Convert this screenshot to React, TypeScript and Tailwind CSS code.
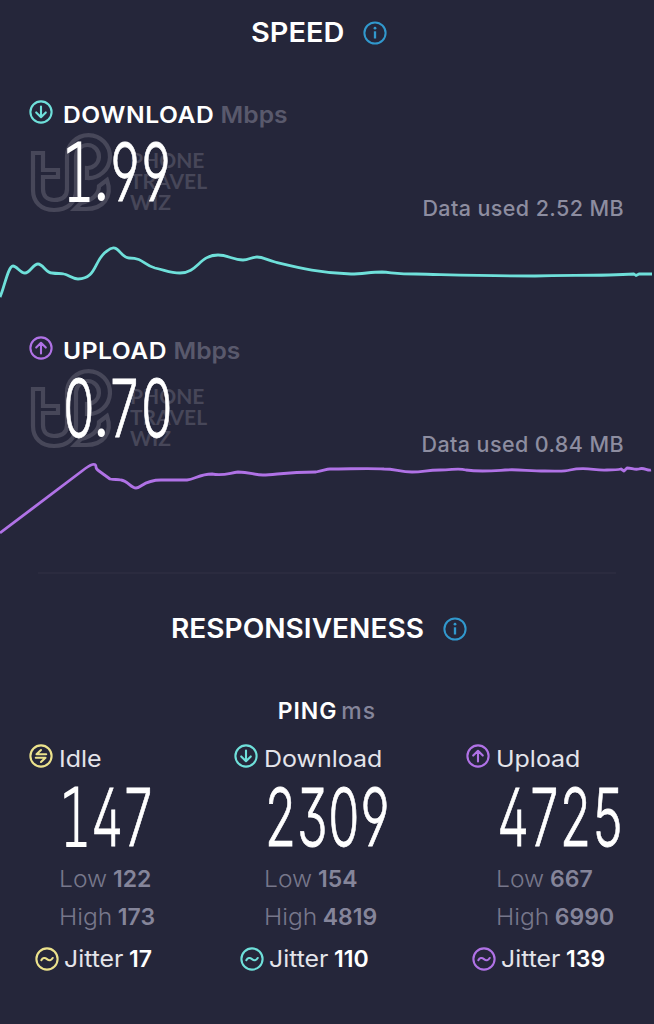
import React from 'react';

type Tone = 'teal' | 'purple' | 'yellow';

const toneClass: Record<Tone, string> = {
    teal: 'text-[#6fe0da]',
    purple: 'text-[#b072e6]',
    yellow: 'text-[#ece28c]',
};

const InfoIcon = () => (
    <svg className="size-6 shrink-0 text-[#3198cd]" viewBox="0 0 24 24" fill="none" stroke="currentColor">
        <circle cx="12" cy="12" r="10.6" strokeWidth="2" />
        <path d="M12 10.3v7.2" strokeWidth="2.3" />
        <circle cx="12" cy="7.2" r="1.4" fill="currentColor" stroke="none" />
    </svg>
);

const paths = {
    down: 'M12 6.5v10.5M7.2 12.4l4.8 4.8 4.8-4.8',
    up: 'M12 17.5V7M7.2 11.6L12 6.8l4.8 4.8',
    idle: 'M17.2 10.2H7.5L12 6M6.8 13.8H16.5L12 18',
    jitter: 'M6.3 13.2c1.4-2.6 3.6-2.8 5.7-1.1s4.2 1.5 5.7-1.1',
};

const RingIcon = ({ kind, tone }: { kind: keyof typeof paths; tone: Tone }) => (
    <svg
        className={`size-6 shrink-0 ${toneClass[tone]}`}
        viewBox="0 0 24 24"
        fill="none"
        stroke="currentColor"
        strokeWidth="2.1"
        strokeLinecap="round"
        strokeLinejoin="round"
    >
        <circle cx="12" cy="12" r="10.6" />
        <path d={paths[kind]} />
    </svg>
);

// Condensed read-out numerals, one fixed cell per digit
const BigNumber = ({ value }: { value: string }) => (
    <div className="flex h-[60px] items-center text-[80px] leading-[60px] font-light text-white">
        {value.split('').map((ch, i) => {
            if (ch === '.') {
                return (
                    <span key={i} className="flex w-[14.5px] justify-center">
                        <span className="scale-x-[0.85]">.</span>
                    </span>
                );
            }
            return (
                <span key={i} className="flex w-[31.5px] justify-center">
                    <span
                        className={
                            ch === '1'
                                ? "translate-y-[2px] scale-x-[0.64] font-['DejaVu_Sans',sans-serif] font-extralight [-webkit-text-stroke:1.8px_white]"
                                : "scale-x-[0.63] [font-feature-settings:'ss01','cv02','cv03','cv04'] [-webkit-text-stroke:0.8px_white]"
                        }
                    >
                        {ch}
                    </span>
                </span>
            );
        })}
    </div>
);

const Watermark = () => (
    <div className="absolute top-[4px] -left-[4px] flex text-[#474759]">
        <svg className="h-[88px] w-[90px]" viewBox="0 0 90 88" fill="none" stroke="currentColor" strokeWidth="4.2">
            <path d="M41 62V28A21.5 21.5 0 1 1 61 49V39A11.5 11.5 0 1 0 50 27V61C50 74 41 81 28 81C15 81 7 73 7 61V24H17V41H32V48H17V60C17 67 21 71 28 71C36 71 41 68 41 60" />
            <path d="M81 51L73 57C73 66 67 71 55 74L49 80H60C77 80 87 68 81 51Z" />
        </svg>
        <div className="mt-[20px] ml-[14px] font-[Lato,sans-serif] text-[21px] leading-[21px] font-bold">
            <div>PHONE</div>
            <div>TRAVEL</div>
            <div>WIZ</div>
        </div>
    </div>
);

interface SpeedProps {
    label: string;
    value: string;
    used: string;
    kind: 'down' | 'up';
    tone: Tone;
    line: string;
}

const SpeedPanel = ({ label, value, used, kind, tone, line }: SpeedProps) => (
    <section className="h-[236px]">
        <div className="flex h-[26px] items-center pl-[29px] text-[23px] font-semibold">
            <RingIcon kind={kind} tone={tone} />
            <div className="mt-[6px] ml-[10px] flex origin-left scale-x-[1.07] gap-[6px]">
                <h2 className="tracking-[0.5px]">{label}</h2>
                <span className="text-[#59596c]">Mbps</span>
            </div>
        </div>
        <div className="relative ml-[30px] h-[80px] pt-[17px] pl-[33px]">
            <Watermark />
            <div className="relative">
                <BigNumber value={value} />
            </div>
        </div>
        <div className="-mt-[11px] flex justify-end pr-[30px] text-[21.5px] leading-[28px] font-medium tracking-[0.4px] text-[#8d8da0]">
            Data used {used} MB
        </div>
        <svg className={`block h-[90px] w-full ${toneClass[tone]}`} viewBox="0 0 654 90" fill="none">
            <path d={line} stroke="currentColor" strokeWidth="2.8" strokeLinejoin="round" />
        </svg>
    </section>
);

interface PingProps {
    label: string;
    kind: 'idle' | 'down' | 'up';
    tone: Tone;
    value: string;
    low: number;
    high: number;
    jitter: number;
}

const StatRow = ({ name, value }: { name: string; value: number }) => (
    <div className="ml-[30px] flex gap-[9px] text-[#77778b]">
        <span className="origin-left scale-x-[1.07] font-light">{name}</span>
        <b className="font-semibold text-[#85859a]">{value}</b>
    </div>
);

const PingColumn = ({ label, kind, tone, value, low, high, jitter }: PingProps) => (
    <div className="text-[23px] leading-[28px]">
        <div className="flex items-center">
            <RingIcon kind={kind} tone={tone} />
            <span className="mt-[6px] ml-[6px] origin-left scale-x-[1.085] text-[#e4e4ea]">{label}</span>
        </div>
        <div className="mt-[14px] ml-[31px]">
            <BigNumber value={value} />
        </div>
        <div className="mt-[18px] flex flex-col gap-[10px]">
            <StatRow name="Low" value={low} />
            <StatRow name="High" value={high} />
        </div>
        <div className="mt-[14px] ml-[6px] flex items-center">
            <RingIcon kind="jitter" tone={tone} />
            <span className="ml-[5px] origin-left scale-x-[1.08] text-[#e4e4ea]">Jitter</span>
            <b className="ml-[10px] font-semibold text-white">{jitter}</b>
        </div>
    </div>
);

const downloadLine =
    'M0 75C4 67 8 44 13 44C17 44 20 51 25 51C30 51 33 42 38 42C43 42 46 51 52 51C58 52 60 51 64 52C69 53 72 57 78 57C97 57 94 37 107 29C118 19 120 36 129 36C144 36 143 43 155 46C165 48 170 51 180 51C198 51 199 33 218 33C228 33 233 38 243 38C249 38 251 35 257 35C263 35 267 38 275 40C300 46 320 51 351 52C363 52 370 50 382 50C395 51 400 52 416 52C460 53 490 54 535 54C570 53 600 54 634 52L636 53.5L639 52H652';

const uploadLine =
    'M0 75L82 13Q96 2 96 9Q96 11 99 13L110 21C115 22 117 21 121 22C128 23 131 30 136 30C141 30 144 22 161 22C170 22 177 22 187 22C195 21 200 16 212 16C224 18 229 15 238 14C250 14 254 17 263 17C275 17 285 14 316 14C325 12 327 11 330 11C350 11 370 10 384 11C395 11 400 14 412 14C424 14 426 12 440 12C453 12 458 10 466 12C480 14 490 13 505 12C518 11 528 13 545 13C558 13 563 14 570 12C587 8 594 13 607 12C613 12 617 12 621 11L624 13L627 10C632 10 634 12 639 11C644 9 647 13 651 12';

const App: React.FC = () => {
    return (
        <main className="h-[1024px] w-[654px] overflow-hidden bg-[#25263a] font-[Inter,'Open_Sans',sans-serif] text-white">
            <header className="flex h-[66px] items-center pl-[251px] text-[27px] font-semibold">
                <h1 className="w-[93px] origin-left scale-x-[1.07]">SPEED</h1>
                <span className="ml-[19px]"><InfoIcon /></span>
            </header>
            <div className="mt-[33px]">
                <SpeedPanel label="DOWNLOAD" value="1.99" used="2.52" kind="down" tone="teal" line={downloadLine} />
                <SpeedPanel label="UPLOAD" value="0.70" used="0.84" kind="up" tone="purple" line={uploadLine} />
            </div>
            <hr className="mt-[1px] mr-[38px] ml-[38px] border-t-2 border-[#2b2b3f]" />
            <header className="mt-[35px] flex h-[40px] items-center pl-[171px] text-[27px] font-semibold">
                <h1 className="w-[253px] origin-left scale-x-[1.04]">RESPONSIVENESS</h1>
                <span className="ml-[19px]"><InfoIcon /></span>
            </header>
            <div className="mt-[48px] flex h-[28px] items-center justify-center gap-[4px] text-[23px]">
                <h2 className="font-semibold tracking-[0.9px]">PING</h2>
                <span className="font-medium tracking-[1px] text-[#85859a]">ms</span>
            </div>
            <div className="mt-[14px] grid grid-cols-[205px_232px_auto] pl-[29px]">
                <PingColumn label="Idle" kind="idle" tone="yellow" value="147" low={122} high={173} jitter={17} />
                <PingColumn label="Download" kind="down" tone="teal" value="2309" low={154} high={4819} jitter={110} />
                <PingColumn label="Upload" kind="up" tone="purple" value="4725" low={667} high={6990} jitter={139} />
            </div>
        </main>
    );
};

export default App;
